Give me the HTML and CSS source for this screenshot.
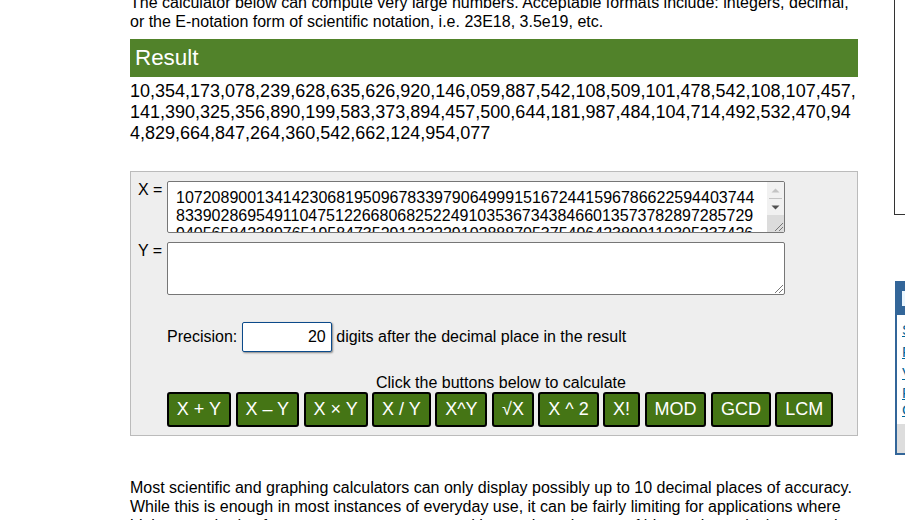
FILE: index.html
```html
<!DOCTYPE html>
<html lang="en">
<head>
<meta charset="utf-8">
<title>Big Number Calculator</title>
<link rel="stylesheet" href="styles.css">
</head>
<body>
<div class="page">
  <main class="content">
    <p class="intro">The calculator below can compute very large numbers. Acceptable formats include: integers, decimal, or the E-notation form of scientific notation, i.e. 23E18, 3.5e19, etc.</p>
    <h2 class="result-title">Result</h2>
    <p class="result-value">10,354,173,078,239,628,635,626,920,146,059,887,542,108,509,101,478,542,108,107,457,<br>141,390,325,356,890,199,583,373,894,457,500,644,181,987,484,104,714,492,532,470,94<br>4,829,664,847,264,360,542,662,124,954,077</p>
    <form class="calc">
      <div class="field field-x">
        <label class="field-label">X =</label>
        <div class="box box-x">
          <div class="box-text">10720890013414230681950967833979064999151672441596786622594403744<br>83390286954911047512266806825224910353673438466013573782897285729<br>94056584238976519584735291223229102888705375496423899110305237426</div>
          <div class="scrollbar">
            <svg class="arrow" width="17" height="16" viewBox="0 0 17 16"><path d="M4.500 10.500L8.500 6.500L12.500 10.500Z" fill="#c4c4c4"/></svg>
            <div class="scroll-thumb"></div>
            <svg class="arrow" width="17" height="16" viewBox="0 0 17 16"><path d="M4.500 6.500L8.500 10.500L12.500 6.500Z" fill="#505050"/></svg>
            <div class="scroll-track"></div>
          </div>
          <svg class="grip" width="10" height="10" viewBox="0 0 10 10"><path d="M1 9L9 1M5 9L9 5" stroke="#777" stroke-width="1"/></svg>
        </div>
      </div>
      <div class="field field-y">
        <label class="field-label">Y =</label>
        <div class="box box-y">
          <svg class="grip" width="10" height="10" viewBox="0 0 10 10"><path d="M1 9L9 1M5 9L9 5" stroke="#777" stroke-width="1"/></svg>
        </div>
      </div>
      <div class="precision">
        <span>Precision:</span>
        <span class="precision-input">20</span>
        <span>digits after the decimal place in the result</span>
      </div>
      <div class="hint">Click the buttons below to calculate</div>
      <div class="buttons">
        <button type="button" class="btn">X + Y</button>
        <button type="button" class="btn">X – Y</button>
        <button type="button" class="btn">X × Y</button>
        <button type="button" class="btn">X / Y</button>
        <button type="button" class="btn">X^Y</button>
        <button type="button" class="btn">√X</button>
        <button type="button" class="btn">X ^ 2</button>
        <button type="button" class="btn">X!</button>
        <button type="button" class="btn">MOD</button>
        <button type="button" class="btn">GCD</button>
        <button type="button" class="btn">LCM</button>
      </div>
    </form>
    <p class="outro">Most scientific and graphing calculators can only display possibly up to 10 decimal places of accuracy. While this is enough in most instances of everyday use, it can be fairly limiting for applications where higher standards of accuracy are necessary, and hence the existence of big number calculators such as this one.</p>
  </main>
  <aside class="side">
    <div class="side-top"></div>
    <div class="side-card">
      <div class="side-head"><span class="side-chip"></span></div>
      <ul class="side-links">
        <li><a href="#">Scientific</a></li>
        <li><a href="#">Fraction</a></li>
        <li><a href="#">Volume</a></li>
        <li class="tight"><a href="#">Percentage</a></li>
        <li class="tight"><a href="#">Conversion</a></li>
      </ul>
      <div class="side-foot"></div>
    </div>
  </aside>
</div>
</body>
</html>
```
FILE: styles.css
```css
html, body {
  margin: 0;
  padding: 0;
  height: 520px;
  overflow: hidden;
  background: #fff;
}
body {
  font-family: "Liberation Sans", Arial, sans-serif;
  font-size: 16px;
  color: #000;
}
.page {
  display: flex;
  width: 1300px;
  margin-top: -7px;
  padding-left: 130px;
}
.content {
  width: 728px;
  flex: none;
}
.intro {
  margin: 0;
  line-height: 19px;
}
.result-title {
  margin: 8px 0 0;
  height: 38px;
  padding-left: 5px;
  background: #51822a;
  color: #fff;
  font-size: 22.400px;
  font-weight: 400;
  line-height: 38px;
}
.result-value {
  margin: 4px 0 0;
  font-size: 18px;
  line-height: 21px;
  white-space: nowrap;
}
.calc {
  margin-top: 27px;
  height: 265px;
  box-sizing: border-box;
  background: #eee;
  border: 1px solid #bbb;
  padding: 9px 0 0 7px;
}
.field {
  display: flex;
  align-items: flex-start;
}
.field-label {
  width: 29px;
  flex: none;
  line-height: 18px;
}
.field-y { margin-top: 9px; }
.box {
  position: relative;
  width: 618px;
  box-sizing: border-box;
  background: #fff;
  border: 1px solid #767676;
  border-radius: 2px;
  overflow: hidden;
}
.box-x { height: 52px; }
.box-y { height: 53px; }
.box-text {
  padding: 7px 0 0 8px;
  line-height: 18px;
  white-space: nowrap;
}
.scrollbar {
  position: absolute;
  top: 0;
  right: 0;
  bottom: 0;
  width: 17px;
  display: flex;
  flex-direction: column;
  background: #f1f1f1;
}
.arrow { display: block; flex: none; }
.scroll-thumb {
  height: 1px;
  margin: 0 2px;
  background: #c4c4c4;
  flex: none;
}
.scroll-track {
  flex: 1;
  background: #dcdcdc;
}
.grip {
  position: absolute;
  right: 0;
  bottom: 0;
}
.precision {
  display: flex;
  align-items: center;
  gap: 4.500px;
  margin: 27px 0 0 29px;
  height: 30px;
}
.precision-input {
  width: 90px;
  height: 30px;
  box-sizing: border-box;
  background: #fff;
  border: 1px solid #0b4a8a;
  border-radius: 2px;
  box-shadow: 1px 1px 2px rgba(0,0,0,.45);
  text-align: right;
  line-height: 28px;
  padding-right: 5px;
}
.hint {
  margin: 21px 0 0 238px;
  line-height: 19px;
  width: 300px;
  white-space: nowrap;
}
.buttons {
  display: flex;
  gap: 4.700px;
  margin-left: 29px;
}
.btn {
  height: 35px;
  padding: 0 7.850px;
  background: #457515;
  border: 2px solid #000;
  border-radius: 3px;
  color: #fff;
  font-family: inherit;
  font-size: 18px;
  line-height: 31px;
  white-space: nowrap;
}
.outro {
  margin: 42px 0 0;
  line-height: 19px;
}
.side {
  margin-left: 36px;
  width: 300px;
  flex: none;
}
.side-top {
  height: 222px;
  box-sizing: border-box;
  border: 1px solid #333;
  border-top: 0;
}
.side-card {
  margin: 66px 0 0 1px;
  height: 174px;
  box-sizing: border-box;
  border: 1px solid #336699;
  border-width: 0 0 2px 2px;
  display: flex;
  flex-direction: column;
}
.side-head {
  height: 34px;
  background: #336699;
  padding: 10px 0 0 5px;
  box-sizing: border-box;
}
.side-chip {
  display: block;
  width: 8px;
  height: 15px;
  background: #eaf6ff;
}
.side-links {
  list-style: none;
  margin: 0;
  padding: 4px 0 0 5px;
  font-size: 15px;
  line-height: 21.500px;
  flex: 1;
}
.side-links .tight {
  line-height: 17px;
}
.side-links a { color: #069; }
.side-foot {
  height: 29px;
  background: #ddd;
}
```
